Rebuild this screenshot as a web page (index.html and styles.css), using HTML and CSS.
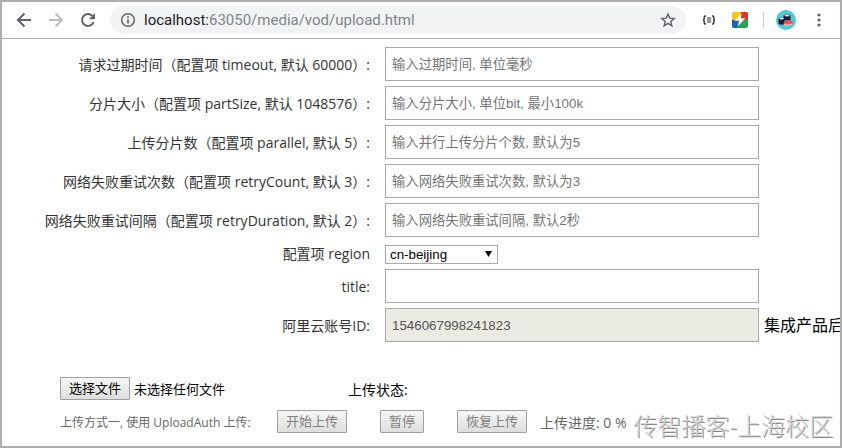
FILE: index.html
```html
<!DOCTYPE html>
<html lang="zh-CN">
<head>
    <meta charset="UTF-8">
    <meta name="viewport" content="width=device-width, initial-scale=1.0">
    <title>upload</title>
    <link rel="stylesheet" href="styles.css">
</head>
<body>
    <header class="toolbar">
        <button class="icon-btn" type="button" aria-label="后退">
            <svg width="16" height="16" viewBox="0 0 16 16" fill="none" stroke="#5f6368" stroke-width="2"><path d="M15 8H2.5M8.5 1.5L2 8l6.5 6.5"/></svg>
        </button>
        <button class="icon-btn" type="button" aria-label="前进" disabled>
            <svg width="16" height="16" viewBox="0 0 16 16" fill="none" stroke="#babcbe" stroke-width="2"><path d="M1 8h12.5M7.5 1.5L14 8l-6.5 6.5"/></svg>
        </button>
        <button class="icon-btn" type="button" aria-label="刷新">
            <svg width="16" height="16" viewBox="0 0 16 16"><path d="M13.6 10.2A6 6 0 1 1 12.4 3.9" fill="none" stroke="#5f6368" stroke-width="2"/><path d="M15 1v6.2H8.800z" fill="#5f6368"/></svg>
        </button>
        <div class="omnibox">
            <svg width="16" height="16" viewBox="0 0 16 16"><circle cx="8" cy="8" r="6.300" fill="none" stroke="#5f6368" stroke-width="1.500"/><path d="M7.200 7h1.600v4.500H7.200zM7.200 4.300h1.600v1.600H7.200z" fill="#5f6368"/></svg>
            <span class="url">localhost:<span class="path">63050/media/vod/upload.html</span></span>
            <button class="icon-btn star" type="button" aria-label="收藏">
                <svg width="16" height="16" viewBox="0 0 16 16" fill="none" stroke="#5f6368" stroke-width="1.400"><path d="M8 2l1.750 4.100 4.450.4-3.400 2.900 1.050 4.350L8 11.400l-3.850 2.350L5.200 9.400 1.800 6.500l4.450-.4z"/></svg>
            </button>
        </div>
        <div class="extensions">
            <svg width="14" height="10" viewBox="0 0 14 10" fill="none" stroke="#333" stroke-width="1.400"><path d="M4 1H3.200Q2.200 1 2.200 2v1.700Q2.200 5 1 5q1.200 0 1.200 1.300V8q0 1 1 1H4M10 1h.8q1 0 1 1v1.700Q11.800 5 13 5q-1.200 0-1.200 1.300V8q0 1-1 1H10"/><path d="M4.800 3h4.400M4.800 5h4.400M4.800 7h4.400" stroke-width="1"/></svg>
            <svg width="16" height="16" viewBox="0 0 16 16"><rect width="16" height="16" rx="2" fill="#f2c81c"/><path d="M9 0h5a2 2 0 0 1 2 2v6H8z" fill="#e2332d"/><path d="M0 8h8v8H2a2 2 0 0 1-2-2z" fill="#1767b0"/><path d="M8 8h8v6a2 2 0 0 1-2 2H6z" fill="#26a650"/><path d="M9.500 1.500L2.500 8.800h4.700L5.500 14.500l8-8.300H8.800z" fill="#fff"/></svg>
            <span class="divider"></span>
            <svg width="20" height="20" viewBox="0 0 20 20"><circle cx="10" cy="10" r="10" fill="#4dcbdd"/><path d="M7.500 5.500q3.500-2.500 7 0v5h-7z" fill="#1f1a30"/><ellipse cx="11" cy="5.600" rx="2.500" ry="1" fill="#efe6ea"/><path d="M2.500 8.500q3-2.500 6.200 0v5q-3 2.500-6.200 0z" fill="#1f1a30"/><ellipse cx="5.600" cy="8.500" rx="2.300" ry="1" fill="#efe6ea"/><path d="M7.500 13.500q1-3.500 5.500-3.300 4 .3 4 2.800-.5 2.500-9 2z" fill="#f5504e"/><path d="M8 14.600q5 .8 8.500-.6" stroke="#f9d5d2" stroke-width=".8" fill="none"/></svg>
            <button class="icon-btn" type="button" aria-label="菜单">
                <svg width="14" height="16" viewBox="0 0 14 16" fill="#5f6368"><circle cx="7" cy="3" r="1.600"/><circle cx="7" cy="8" r="1.600"/><circle cx="7" cy="13" r="1.600"/></svg>
            </button>
        </div>
    </header>

    <main>
        <form class="settings">
            <label for="timeout">请求过期时间（配置项 timeout, 默认 60000）:</label>
            <input class="input" type="text" id="timeout" placeholder="输入过期时间, 单位毫秒">

            <label for="partSize">分片大小（配置项 partSize, 默认 1048576）:</label>
            <input class="input" type="text" id="partSize" placeholder="输入分片大小, 单位bit, 最小100k">

            <label for="parallel">上传分片数（配置项 parallel, 默认 5）:</label>
            <input class="input" type="text" id="parallel" placeholder="输入并行上传分片个数, 默认为5">

            <label for="retryCount">网络失败重试次数（配置项 retryCount, 默认 3）:</label>
            <input class="input" type="text" id="retryCount" placeholder="输入网络失败重试次数, 默认为3">

            <label for="retryDuration">网络失败重试间隔（配置项 retryDuration, 默认 2）:</label>
            <input class="input" type="text" id="retryDuration" placeholder="输入网络失败重试间隔, 默认2秒">

            <label for="region">配置项 region</label>
            <div class="select-wrap">
                <select id="region">
                    <option>cn-beijing</option>
                    <option>cn-shanghai</option>
                </select>
                <svg class="arrow" width="7" height="6" viewBox="0 0 7 6"><path d="M0 0h7L3.500 6z"/></svg>
            </div>

            <label for="title">title:</label>
            <input class="input" type="text" id="title">

            <label for="userId">阿里云账号ID:</label>
            <div class="account">
                <input class="input" type="text" id="userId" value="1546067998241823" disabled>
                <span class="note">集成产品后</span>
            </div>
        </form>

        <section class="upload">
            <div class="file-row">
                <div class="file">
                    <input class="file-input" type="file" id="fileUpload">
                    <label class="btn" for="fileUpload">选择文件</label>
                    <span class="file-name">未选择任何文件</span>
                </div>
                <span class="status">上传状态:</span>
            </div>
            <div class="upload-type">
                <span class="method">上传方式一, 使用 UploadAuth 上传:</span>
                <button class="btn" type="button" disabled>开始上传</button>
                <button class="btn" type="button" disabled>暂停</button>
                <button class="btn" type="button" disabled>恢复上传</button>
                <span class="progress">上传进度: 0 %</span>
            </div>
        </section>
    </main>
    <div class="watermark">传智播客-上海校区</div>
</body>
</html>
```

FILE: styles.css
```css
* {
    box-sizing: border-box;
}
body {
    margin: 0;
    min-height: 100vh;
    border: 2px solid #b1adad;
    background: #fff;
    color: #333;
    font-family: "Open Sans", "Noto Sans CJK SC", sans-serif;
    font-size: 14px;
    overflow: hidden;
}

/* browser bar */
.toolbar {
    display: flex;
    align-items: center;
    height: 37px;
    padding: 0 14px;
    gap: 16px;
    border-bottom: 1px solid #b1adad;
}
.icon-btn {
    display: flex;
    padding: 0;
    border: none;
    background: none;
}
.omnibox {
    display: flex;
    flex: 1;
    align-items: center;
    gap: 8px;
    height: 28px;
    margin-left: -2px;
    padding: 0 10px;
    border-radius: 14px;
    background: #f1f3f4;
}
.url {
    color: #202124;
    font-family: Roboto, sans-serif;
    font-size: 15px;
}
.path {
    color: #80868b;
}
.star {
    margin-left: auto;
}
.extensions {
    display: flex;
    align-items: center;
    gap: 16px;
}
.divider {
    width: 1px;
    height: 16px;
    margin: 0 -4px 0 -1px;
    background: #ccc;
}

/* settings */
.settings {
    display: grid;
    grid-template-columns: 368px 1fr;
    align-items: center;
    gap: 5px 15px;
    padding-top: 8px;
}
.settings > label {
    padding-top: 2px;
    line-height: 20px;
    text-align: right;
    white-space: nowrap;
}
.input {
    display: block;
    width: 374px;
    height: 34px;
    padding: 0 6px;
    border: 1px solid #a9a9a9;
    background: #fff;
    font-family: "Liberation Sans", "Noto Sans CJK SC", sans-serif;
}
.input::placeholder {
    color: #757575;
}
.input:disabled {
    background: #ebebe4;
    color: #545454;
}
.select-wrap {
    position: relative;
    width: 113px;
    padding-top: 3px;
}
select {
    display: block;
    appearance: none;
    width: 100%;
    height: 19px;
    padding: 0 4px;
    border: 1px solid #a9a9a9;
    border-radius: 0;
    background: #fff;
    color: #000;
    font-family: "Liberation Sans", sans-serif;
}
.arrow {
    position: absolute;
    top: 9px;
    right: 6px;
    pointer-events: none;
}
.account {
    display: flex;
    align-items: center;
    gap: 5px;
}
.account .input {
    flex-shrink: 0;
}
.note {
    color: #000;
    font-size: 16px;
    line-height: 20px;
    white-space: nowrap;
}

/* upload */
.upload {
    padding: 35px 0 0 58px;
}
.file-row {
    display: flex;
    align-items: center;
    color: #000;
}
.file {
    display: flex;
    align-items: center;
    gap: 4px;
    width: 288px;
}
.file-input {
    position: absolute;
    width: 1px;
    height: 1px;
    opacity: 0;
}
.btn {
    height: 23px;
    padding: 0 8px;
    border: 1px solid #a0a0a0;
    border-radius: 1px;
    background: linear-gradient(#f6f6f6, #dedede);
    color: #000;
    font: 13px/21px "Liberation Sans", "Noto Sans CJK SC", sans-serif;
    white-space: nowrap;
}
.btn:disabled {
    color: #808080;
}
.file-name {
    font-size: 13px;
}
.upload-type {
    display: flex;
    align-items: center;
    margin-top: 10px;
    color: #666;
}
.method {
    width: 217px;
    font-size: 12px;
    white-space: nowrap;
}
.upload-type .btn {
    margin-right: 33px;
}
.upload-type .btn:last-of-type {
    margin-right: 13px;
}
.watermark {
    position: absolute;
    right: 9px;
    bottom: 4px;
    color: #d8d8d8;
    font-size: 24px;
    font-weight: 300;
    line-height: 36px;
    text-shadow: 1px 1px 0 #8a8a8a;
}
```
